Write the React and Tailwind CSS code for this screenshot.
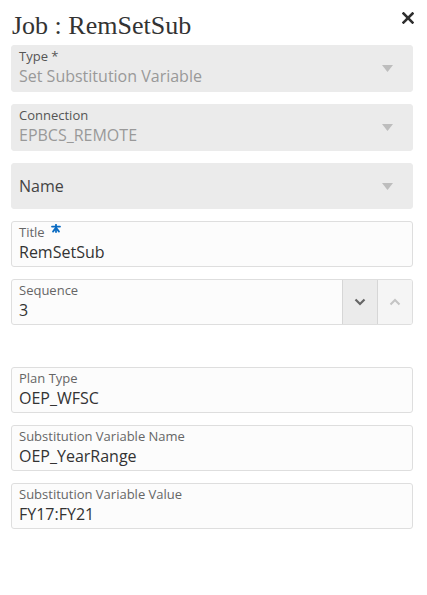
import React from "react";

const sans = { fontFamily: '"Open Sans", "Noto Sans", sans-serif' };

function Caret() {
  return (
    <svg width="11" height="7" viewBox="0 0 11 7" className="shrink-0">
      <polygon points="0,0 11,0 5.5,7" fill="#bdbdbd" />
    </svg>
  );
}

function SelectBox({ label, value, required }) {
  return (
    <div className="flex items-start h-[47px] rounded-[3px] bg-[#ebebeb] border border-[#ebebeb] pl-[7px] pr-[19px]">
      <div className="flex-1 flex flex-col pt-[1px]">
        <div className="text-[13px] leading-[18px] text-[#555]">
          {label}
          {required ? " *" : ""}
        </div>
        <div className="text-[16px] leading-[22px] text-[#999]">{value}</div>
      </div>
      <div className="self-center">
        <Caret />
      </div>
    </div>
  );
}

function InputBox({ label, value, star }) {
  return (
    <div className="flex flex-col h-[46px] rounded-[3px] bg-[#fcfcfc] border border-[#dedede] pl-[7px] pr-[8px] pt-[1px]">
      <div className="text-[13px] leading-[18px] text-[#666] flex items-start">
        <span>{label}</span>
        {star && (
          <svg width="10" height="9" viewBox="0 0 10 9" className="ml-[6px] mt-[1px]">
            <g stroke="#0a6bc2" strokeWidth="1.8" strokeLinecap="round">
              <line x1="5" y1="0.8" x2="5" y2="8" />
              <line x1="1" y1="2.6" x2="9" y2="2.6" />
              <line x1="5" y1="3.6" x2="2" y2="7.6" />
              <line x1="5" y1="3.6" x2="8" y2="7.6" />
            </g>
          </svg>
        )}
      </div>
      <div className="text-[16px] leading-[22px] text-[#333]">{value}</div>
    </div>
  );
}

export default function App() {
  return (
    <div className="w-[427px] h-[595px] bg-white pl-[11px] pr-[14px] pt-[10px]" style={sans}>
      <div className="flex justify-between items-start h-[32px] mb-[3px]">
        <div
          className="text-[26px] leading-[32px] text-[#333] pl-[1px]"
          style={{ fontFamily: '"Liberation Serif", "Times New Roman", serif' }}
        >
          Job : RemSetSub
        </div>
        <svg width="12" height="12" viewBox="0 0 12 12" className="mt-[2px] -mr-[1px]">
          <g stroke="#2e2e2e" strokeWidth="2.6" strokeLinecap="square">
            <line x1="1.5" y1="1.5" x2="10.5" y2="10.5" />
            <line x1="10.5" y1="1.5" x2="1.5" y2="10.5" />
          </g>
        </svg>
      </div>

      <div className="flex flex-col gap-[12px]">
        <SelectBox label="Type" value="Set Substitution Variable" required />
        <SelectBox label="Connection" value="EPBCS_REMOTE" />
        <div className="flex items-center h-[46px] rounded-[3px] bg-[#ebebeb] border border-[#ebebeb] pl-[7px] pr-[19px]">
          <div className="flex-1 text-[16px] leading-[22px] text-[#444]">Name</div>
          <Caret />
        </div>
        <InputBox label="Title" value="RemSetSub" star />
        <div className="flex h-[46px] rounded-[3px] bg-[#fcfcfc] border border-[#dedede] overflow-hidden">
          <div className="flex-1 flex flex-col pl-[7px] pt-[1px]">
            <div className="text-[13px] leading-[18px] text-[#666]">Sequence</div>
            <div className="text-[16px] leading-[22px] text-[#333]">3</div>
          </div>
          <div className="w-[35px] bg-[#ebebeb] border-l border-[#d6d6d6] flex items-center justify-center">
            <svg width="12" height="8" viewBox="0 0 12 8">
              <polyline points="1.5,1.5 6,6 10.5,1.5" fill="none" stroke="#666" strokeWidth="2.2" />
            </svg>
          </div>
          <div className="w-[35px] bg-[#f5f5f5] border-l border-[#d6d6d6] flex items-center justify-center">
            <svg width="12" height="8" viewBox="0 0 12 8">
              <polyline points="1.5,6.5 6,2 10.5,6.5" fill="none" stroke="#c4c4c4" strokeWidth="2" />
            </svg>
          </div>
        </div>
      </div>

      <div className="flex flex-col gap-[12px] mt-[42px]">
        <InputBox label="Plan Type" value="OEP_WFSC" />
        <InputBox label="Substitution Variable Name" value="OEP_YearRange" />
        <InputBox label="Substitution Variable Value" value="FY17:FY21" />
      </div>
    </div>
  );
}
